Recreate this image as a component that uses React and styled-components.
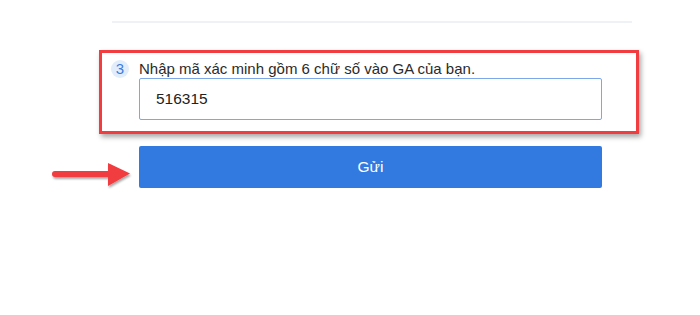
import React from "react";
import styled, { createGlobalStyle } from "styled-components";

const Global = createGlobalStyle`
  html, body { margin: 0; padding: 0; background: #ffffff; }
  body { font-family: "Liberation Sans", Arial, sans-serif; }
`;

const Page = styled.div`
  width: 700px;
  height: 315px;
  padding-top: 21px;
  box-sizing: border-box;
  background: #fff;
`;

const Divider = styled.div`
  margin-left: 112px;
  width: 520px;
  height: 2px;
  background: #eef1f5;
`;

const Highlight = styled.section`
  margin-top: 27px;
  margin-left: 99px;
  width: 540px;
  height: 84px;
  box-sizing: border-box;
  border: 3px solid #f13c40;
  box-shadow: 2px 3px 5px rgba(0, 0, 0, 0.35);
  padding: 6px 0 0 9px;
  display: flex;
  flex-direction: column;
`;

const StepRow = styled.div`
  display: flex;
  align-items: center;
  gap: 10px;
  height: 19px;
`;

const StepBadge = styled.span`
  width: 18px;
  height: 18px;
  border-radius: 50%;
  background: #e2edfb;
  color: #3b7ddf;
  font-size: 15px;
  display: flex;
  align-items: center;
  justify-content: center;
  flex: none;
`;

const StepLabel = styled.span`
  font-size: 15px;
  color: #2b2b2b;
  white-space: nowrap;
`;

const CodeInput = styled.input`
  margin-left: 28px;
  width: 463px;
  height: 42px;
  box-sizing: border-box;
  border: 1px solid #7ca7e8;
  border-radius: 2px;
  padding: 0 16px;
  font-family: "Liberation Sans", Arial, sans-serif;
  font-size: 15.5px;
  color: #222;
  outline: none;
  background: #fff;
`;

const ActionRow = styled.div`
  margin-top: 12px;
  padding-left: 52px;
  display: flex;
  align-items: flex-start;
  gap: 7px;
`;

const PointerArrow = styled.svg`
  width: 80px;
  height: 46px;
  flex: none;
  overflow: visible;
`;

const SubmitButton = styled.button`
  width: 463px;
  height: 42px;
  border: none;
  border-radius: 2px;
  background: #337ae0;
  color: #fff;
  font-family: "Liberation Sans", Arial, sans-serif;
  font-size: 15.5px;
  cursor: pointer;
`;

export default function App() {
  return (
    <>
      <Global />
      <Page>
        <Divider />
        <Highlight>
          <StepRow>
            <StepBadge>3</StepBadge>
            <StepLabel>Nhập mã xác minh gồm 6 chữ số vào GA của bạn.</StepLabel>
          </StepRow>
          <CodeInput defaultValue="516315" />
        </Highlight>
        <ActionRow>
          <PointerArrow viewBox="0 0 80 46">
            <defs>
              <filter id="arrowShadow" x="-20%" y="-40%" width="140%" height="180%">
                <feDropShadow dx="1" dy="2" stdDeviation="1.3" floodColor="#000" floodOpacity="0.35" />
              </filter>
            </defs>
            <g filter="url(#arrowShadow)" fill="#f13c40">
              <rect x="0" y="25" width="60" height="6" rx="3" />
              <polygon points="56,17 78,27.5 56,40" />
            </g>
          </PointerArrow>
          <SubmitButton>Gửi</SubmitButton>
        </ActionRow>
      </Page>
    </>
  );
}
